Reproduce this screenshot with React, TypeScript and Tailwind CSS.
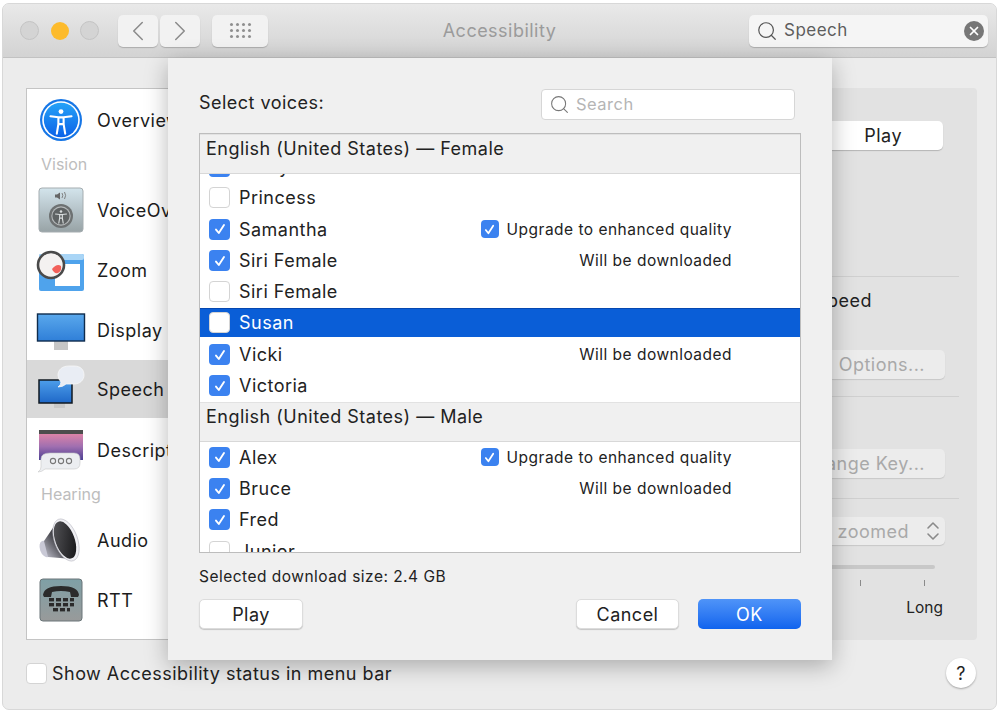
import { Search, X, ChevronLeft, ChevronRight } from 'lucide-react';

function Check({ size = 14 }: { size?: number }) {
  return (
    <svg width={size} height={size} viewBox="0 0 14 14" fill="none">
      <path d="M3 7.6 L5.8 11 L11 3" stroke="white" strokeWidth="1.9" strokeLinecap="round" strokeLinejoin="round" />
    </svg>
  );
}

function Box({ on = false }: { on?: boolean }) {
  if (on) {
    return (
      <span className="flex h-[21px] w-[21px] shrink-0 items-center justify-center rounded-[4px] bg-[#3b82f0]">
        <Check />
      </span>
    );
  }
  return <span className="h-[21px] w-[21px] shrink-0 rounded-[4px] border border-[#d4d4d4] bg-white" />;
}

function Figure({ cx, cy, s, color }: { cx: number; cy: number; s: number; color: string }) {
  return (
    <g transform={`translate(${cx} ${cy}) scale(${s})`} stroke={color} fill="none" strokeLinecap="round" strokeLinejoin="round">
      <circle cx="0" cy="-9" r="2.3" fill={color} stroke="none" />
      <path d="M-10 -4.5 L-2.5 -3.5 L-2.5 3 L-4 12 M10 -4.5 L2.5 -3.5 L2.5 3 L4 12 M-2.5 -3.5 L2.5 -3.5 M-2.5 3 L0 3 L2.5 3" strokeWidth="2" />
    </g>
  );
}

function OverviewIcon() {
  return (
    <svg width="50" height="50" viewBox="0 0 50 50">
      <defs>
        <linearGradient id="ov" x1="0" y1="0" x2="0" y2="1">
          <stop offset="0" stopColor="#25a2f7" />
          <stop offset="1" stopColor="#0a62e8" />
        </linearGradient>
      </defs>
      <circle cx="25" cy="25" r="21" fill="#1676e6" />
      <circle cx="25" cy="25" r="18.8" fill="white" />
      <circle cx="25" cy="25" r="17.2" fill="url(#ov)" />
      <Figure cx={25} cy={26} s={1.05} color="white" />
    </svg>
  );
}

function VoiceOverIcon() {
  return (
    <svg width="50" height="50" viewBox="0 0 50 50">
      <defs>
        <linearGradient id="vo" x1="0" y1="0" x2="0" y2="1">
          <stop offset="0" stopColor="#d3e4ec" />
          <stop offset="1" stopColor="#98a3a6" />
        </linearGradient>
      </defs>
      <rect x="3" y="3" width="44" height="44" rx="3" fill="url(#vo)" stroke="#a5adb0" />
      <path d="M19 9.5 h2 l3 -2 v7 l-3 -2 h-2 z" fill="#666" />
      <path d="M26 8 q1.6 2.5 0 5 M28.5 7 q2.2 3.5 0 7" stroke="#777" strokeWidth="0.9" fill="none" />
      <circle cx="25" cy="31" r="12" fill="#6d7172" />
      <circle cx="25" cy="31" r="9.7" fill="#b5b9ba" />
      <circle cx="25" cy="31" r="8.6" fill="#5f6364" />
      <Figure cx={25} cy={31.5} s={0.55} color="#d8dcdd" />
    </svg>
  );
}

function ZoomIcon() {
  return (
    <svg width="50" height="50" viewBox="0 0 50 50">
      <rect x="3" y="9" width="45" height="37" rx="2" fill="#4fa3ec" />
      <rect x="3" y="9" width="45" height="6" rx="2" fill="#a9d5f6" />
      <rect x="19" y="19" width="25" height="22" fill="white" />
      <circle cx="15" cy="20" r="13" fill="#f4f1f0" stroke="#4a4a4a" strokeWidth="2.6" />
      <path d="M16 24 q5 -6 9 -3 q1 5 -3 7 q-4 1 -6 -4 z" fill="#f2605a" />
    </svg>
  );
}

function DisplayIcon() {
  return (
    <svg width="50" height="50" viewBox="0 0 50 50">
      <defs>
        <linearGradient id="dp" x1="0" y1="0" x2="0" y2="1">
          <stop offset="0" stopColor="#5aa8ec" />
          <stop offset="1" stopColor="#2f7fd8" />
        </linearGradient>
      </defs>
      <rect x="18" y="36" width="14" height="9" fill="#c6c6c6" />
      <rect x="1.5" y="9" width="47" height="27" fill="url(#dp)" stroke="#0f2c4d" strokeWidth="1.4" />
    </svg>
  );
}

function SpeechIcon() {
  return (
    <svg width="50" height="50" viewBox="0 0 50 50">
      <defs>
        <linearGradient id="sp" x1="0" y1="0" x2="0" y2="1">
          <stop offset="0" stopColor="#4d9eea" />
          <stop offset="1" stopColor="#1f68c8" />
        </linearGradient>
      </defs>
      <rect x="18" y="39" width="11" height="5" fill="#c9c9c9" />
      <rect x="3" y="16" width="33" height="23" fill="url(#sp)" stroke="#101820" strokeWidth="1.5" />
      <path d="M33 2 h5 c7 0 10 4 10 9 s-4 9 -10 9 h-8 q-3 3 -8 3 q3 -2 3 -5 q-3 -3 -3 -7 c0 -5 4 -9 11 -9 z" fill="#e9edf4" stroke="#f7f7f7" strokeWidth="0.8" />
    </svg>
  );
}

function DescriptionIcon() {
  return (
    <svg width="50" height="50" viewBox="0 0 50 50">
      <defs>
        <linearGradient id="ds" x1="0" y1="0" x2="0" y2="1">
          <stop offset="0" stopColor="#ef8aa6" />
          <stop offset="0.55" stopColor="#a06fb0" />
          <stop offset="1" stopColor="#4c3f92" />
        </linearGradient>
      </defs>
      <rect x="3" y="5" width="44" height="30" fill="url(#ds)" />
      <rect x="3" y="5" width="44" height="4" fill="#4d4d4d" />
      <path d="M14 28 h24 q6 0 6 6 v4 q0 6 -6 6 h-24 q-4 0 -5 0 q-3 3 -7 3 q3 -2 3 -5 v-8 q0 -6 9 -6 z" fill="#eceef1" stroke="#c7c7c7" strokeWidth="0.6" />
      <circle cx="17" cy="36" r="2.6" fill="none" stroke="#777" strokeWidth="1.1" />
      <circle cx="25" cy="36" r="2.6" fill="none" stroke="#777" strokeWidth="1.1" />
      <circle cx="33" cy="36" r="2.6" fill="none" stroke="#777" strokeWidth="1.1" />
    </svg>
  );
}

function AudioIcon() {
  return (
    <svg width="50" height="50" viewBox="0 0 50 50">
      <defs>
        <linearGradient id="au" x1="0" y1="0" x2="1" y2="1">
          <stop offset="0" stopColor="#5a5a5e" />
          <stop offset="1" stopColor="#101012" />
        </linearGradient>
        <linearGradient id="cone" x1="0" y1="1" x2="1" y2="0">
          <stop offset="0" stopColor="#c9c9d6" />
          <stop offset="0.45" stopColor="#4a4a50" />
          <stop offset="1" stopColor="#1c1c1e" />
        </linearGradient>
      </defs>
      <ellipse cx="9" cy="34" rx="5" ry="8.5" transform="rotate(-20 9 34)" fill="#c9c9d6" />
      <path d="M21 7 L8 26 L12 42 L36 44 z" fill="url(#cone)" />
      <ellipse cx="30" cy="25" rx="11.5" ry="22" transform="rotate(-20 30 25)" fill="#f0f0f4" stroke="#b9b9c2" strokeWidth="0.6" />
      <ellipse cx="29" cy="25" rx="9.6" ry="19.5" transform="rotate(-20 29 25)" fill="url(#au)" />
    </svg>
  );
}

function RttIcon() {
  return (
    <svg width="50" height="50" viewBox="0 0 50 50">
      <defs>
        <linearGradient id="rt" x1="0" y1="0" x2="0" y2="1">
          <stop offset="0" stopColor="#7fa0a6" />
          <stop offset="1" stopColor="#989a9a" />
        </linearGradient>
      </defs>
      <rect x="4" y="4" width="42" height="42" rx="3" fill="url(#rt)" stroke="#6a7578" />
      <path d="M7 20 q1 -9 18 -9 t18 9 l-1 2 h-7 l-1 -5 q-9 -2 -18 0 l-1 5 h-7 z" fill="#2b2b2b" />
      <g fill="#2b2b2b">
        <rect x="13" y="23" width="5" height="3.4" />
        <rect x="20" y="23" width="5" height="3.4" />
        <rect x="27" y="23" width="5" height="3.4" />
        <rect x="34" y="23" width="4" height="3.4" />
        <rect x="13" y="28" width="5" height="3.4" />
        <rect x="20" y="28" width="5" height="3.4" />
        <rect x="27" y="28" width="5" height="3.4" />
        <rect x="34" y="28" width="4" height="3.4" />
        <rect x="17" y="33" width="5" height="3.4" />
        <rect x="24" y="33" width="5" height="3.4" />
        <rect x="31" y="33" width="3" height="3.4" />
      </g>
    </svg>
  );
}

function PaneRow({ icon, label, active }: { icon: React.ReactNode; label: string; active?: boolean }) {
  return (
    <div className={`flex items-center gap-[11px] pl-[9px] whitespace-nowrap text-[18px] text-[#1c1c1c] ${active ? 'mb-[2px] h-[58px] bg-[#d9d9d9]' : 'h-[60px]'}`}>
      {icon}
      {label}
    </div>
  );
}

function PaneLabel({ children }: { children: string }) {
  return <div className="flex h-[30px] items-center pb-[2px] pl-[14px] text-[16px] tracking-normal text-[#bdbdbd]">{children}</div>;
}

function VoiceRow({ name, on, extra, upgrade, selected }: { name: string; on?: boolean; extra?: string; upgrade?: boolean; selected?: boolean }) {
  return (
    <div className={`flex shrink-0 items-center gap-[9px] pl-[9px] text-[18px] ${selected ? 'mb-[2.33px] h-[29px] border-t border-[#0647b0] bg-[#0a5ed7] text-white' : 'h-[31.33px] text-[#222]'}`}>
      <Box on={on} />
      {name}
      {upgrade && (
        <span className="mr-[68px] ml-auto flex items-center gap-[8px] text-[15.5px]">
          <span className="flex h-[18px] w-[18px] items-center justify-center rounded-[4px] bg-[#3b82f0]">
            <Check size={13} />
          </span>
          Upgrade to enhanced quality
        </span>
      )}
      {extra && <span className="mr-[68px] ml-auto text-[15.5px]">{extra}</span>}
    </div>
  );
}

function GroupHeader({ children }: { children: string }) {
  return (
    <div className="relative z-10 h-[40px] shrink-0 border-t border-b border-t-[#e2e2e2] border-b-[#d8d8d8] bg-[#f0f0f0] pt-[1px] pl-[6px] text-[18px] leading-[26px] text-[#222]">
      {children}
    </div>
  );
}

function DlgButton({ children, width, primary }: { children: string; width: string; primary?: boolean }) {
  const tone = primary
    ? 'bg-gradient-to-b from-[#4f94f8] to-[#0f63ee] text-white'
    : 'bg-white text-[#222] border border-[#dcdcdc] shadow-[0_1px_1px_rgba(0,0,0,0.18)]';
  return <div className={`flex h-[30px] items-center justify-center rounded-[5px] text-[18px] ${width} ${tone}`}>{children}</div>;
}

function FaintButton({ children }: { children: string }) {
  return (
    <div className="mr-[32px] flex h-[29px] w-[180px] items-center justify-end rounded-[5px] bg-[#ececec] pr-[20px] text-[18px] text-[#a9a9a9] shadow-[0_1px_1px_rgba(0,0,0,0.12)]">
      {children}
    </div>
  );
}

export default function App() {
  return (
    <div className="relative h-[712px] w-[1000px] overflow-hidden bg-white pt-[3px] pr-[3px] pb-[2px] pl-[2px] font-['Inter',sans-serif] tracking-[0.48px]">
      <div className="flex h-full flex-col overflow-hidden rounded-[7px] border border-[#d8d8d8] bg-[#ececec]">
        <header className="relative flex h-[54px] shrink-0 items-center border-b border-[#c2c2c2] bg-gradient-to-b from-[#e9e9e9] to-[#d3d3d3] pl-[17px]">
          <span className="h-[19px] w-[19px] rounded-full border border-[#c4c4c4] bg-[#d4d4d4]" />
          <span className="ml-[12px] h-[18px] w-[18px] rounded-full bg-[#fdbb2c]" />
          <span className="ml-[11px] h-[19px] w-[19px] rounded-full border border-[#c4c4c4] bg-[#d4d4d4]" />
          <div className="ml-[19px] flex h-[32px] w-[40px] items-center justify-center rounded-[5px] bg-[#f2f2f2] shadow-[0_1px_1px_rgba(0,0,0,0.2)]">
            <ChevronLeft size={34} strokeWidth={1.1} className="text-[#8c8c8c]" />
          </div>
          <div className="ml-[2px] flex h-[32px] w-[40px] items-center justify-center rounded-[5px] bg-[#f2f2f2] shadow-[0_1px_1px_rgba(0,0,0,0.2)]">
            <ChevronRight size={34} strokeWidth={1.1} className="text-[#8c8c8c]" />
          </div>
          <div className="ml-[12px] flex h-[32px] w-[56px] items-center justify-center rounded-[5px] bg-[#f2f2f2] shadow-[0_1px_1px_rgba(0,0,0,0.2)]">
            <div className="grid grid-cols-4 gap-x-[3px] gap-y-[3px]">
              {Array.from({ length: 12 }).map((_, i) => (
                <span key={i} className="h-[3px] w-[3px] rounded-full bg-[#8f8f8f]" />
              ))}
            </div>
          </div>
          <div className="absolute left-0 w-full text-center text-[18px] text-[#9b9b9b]">Accessibility</div>
          <div className="relative mr-[8px] ml-auto flex h-[32px] w-[239px] items-center gap-[6px] rounded-[5px] bg-[#f5f5f5] pr-[4px] pl-[7px] text-[17px] text-[#5d5d5d] shadow-[0_1px_1px_rgba(0,0,0,0.2)]">
            <Search size={22} strokeWidth={1.3} className="text-[#555]" />
            Speech
            <span className="ml-auto flex h-[20px] w-[20px] items-center justify-center rounded-full bg-[#777]">
              <X size={14} strokeWidth={3} className="text-white" />
            </span>
          </div>
        </header>

        <div className="mt-[30px] flex h-[552px] shrink-0 pr-[19px] pl-[23px]">
          <nav className="h-[552px] w-[210px] shrink-0 border border-[#c4c4c4] bg-white pt-[1px]">
            <PaneRow icon={<OverviewIcon />} label="Overview" />
            <PaneLabel>Vision</PaneLabel>
            <PaneRow icon={<VoiceOverIcon />} label="VoiceOver" />
            <PaneRow icon={<ZoomIcon />} label="Zoom" />
            <PaneRow icon={<DisplayIcon />} label="Display" />
            <PaneRow icon={<SpeechIcon />} label="Speech" active />
            <PaneRow icon={<DescriptionIcon />} label="Descriptions" />
            <PaneLabel>Hearing</PaneLabel>
            <PaneRow icon={<AudioIcon />} label="Audio" />
            <PaneRow icon={<RttIcon />} label="RTT" />
          </nav>
          <section className="flex flex-1 flex-col items-end rounded-r-[4px] bg-[#e2e2e2] text-[18px] text-[#222]">
            <div className="mt-[33px] mr-[34px] flex h-[29px] w-[180px] items-center justify-end rounded-[5px] bg-white pr-[41px] shadow-[0_1px_1px_rgba(0,0,0,0.2)]">
              Play
            </div>
            <div className="mt-[126px] mr-[18px] h-px w-[200px] bg-[#d0d0d0]" />
            <div className="mt-[12px] mr-[105px] leading-[24px]">Speed</div>
            <div className="mt-[37px]"><FaintButton>Options...</FaintButton></div>
            <div className="mt-[17px] mr-[18px] h-px w-[200px] bg-[#d0d0d0]" />
            <div className="mt-[52px]"><FaintButton>Change Key...</FaintButton></div>
            <div className="mt-[20px] mr-[18px] h-px w-[200px] bg-[#d0d0d0]" />
            <div className="mt-[18px] mr-[32px] flex h-[28px] w-[180px] items-center justify-end gap-[16px] rounded-[5px] bg-[#ececec] pr-[4px] text-[#a9a9a9] shadow-[0_1px_1px_rgba(0,0,0,0.12)]">
              zoomed
              <svg width="16" height="24" viewBox="0 0 16 24" fill="none" stroke="#8a8a8a" strokeWidth="1.6" strokeLinecap="round" strokeLinejoin="round">
                <path d="M3 9 L8 4 L13 9 M3 15 L8 20 L13 15" />
              </svg>
            </div>
            <div className="mt-[20px] mr-[42px] h-[4px] w-[180px] rounded-full bg-[#c8c8c8]" />
            <div className="mt-[11px] mr-[52px] flex w-[65px] justify-between">
              <span className="h-[6px] w-px bg-[#8a8a8a]" />
              <span className="h-[6px] w-px bg-[#8a8a8a]" />
            </div>
            <div className="mt-[10px] mr-[34px] text-[15.5px] leading-[24px] tracking-normal">Long</div>
          </section>
        </div>

        <footer className="flex flex-1 items-start pt-[18px] pr-[20px] pl-[23px] text-[18px] text-[#222]">
          <span className="mt-[5px] h-[21px] w-[21px] rounded-[4px] border border-[#d4d4d4] bg-white" />
          <span className="mt-[3px] ml-[5px] leading-[26px]">Show Accessibility status in menu bar</span>
          <span className="ml-auto flex h-[30px] w-[30px] items-center justify-center rounded-full bg-white text-[18px] shadow-[0_1px_2px_rgba(0,0,0,0.3)]">?</span>
        </footer>
      </div>

      <div className="absolute top-[58px] left-[168px] flex h-[602px] w-[664px] flex-col bg-[#f0f0f0] px-[31px] text-[#222] shadow-[0_6px_22px_rgba(0,0,0,0.28)]">
        <div className="flex h-[75px] shrink-0 items-start justify-between pr-[6px]">
          <div className="mt-[32px] text-[18px] leading-[26px]">Select voices:</div>
          <div className="mt-[31px] flex h-[31px] w-[254px] items-center gap-[6px] rounded-[4px] border border-[#d6d6d6] bg-white pl-[7px] text-[16.5px] text-[#b5b5b5]">
            <Search size={21} strokeWidth={1.2} className="text-[#777]" />
            Search
          </div>
        </div>

        <div className="flex h-[420px] shrink-0 flex-col overflow-hidden border border-[#bdbdbd] bg-white">
          <GroupHeader>English (United States) — Female</GroupHeader>
          <div className="mt-[-23px] shrink-0">
            <VoiceRow name="Nicky" on />
          </div>
          <VoiceRow name="Princess" />
          <VoiceRow name="Samantha" on upgrade />
          <VoiceRow name="Siri Female" on extra="Will be downloaded" />
          <VoiceRow name="Siri Female" />
          <VoiceRow name="Susan" selected />
          <VoiceRow name="Vicki" on extra="Will be downloaded" />
          <VoiceRow name="Victoria" on />
          <GroupHeader>English (United States) — Male</GroupHeader>
          <VoiceRow name="Alex" on upgrade />
          <VoiceRow name="Bruce" on extra="Will be downloaded" />
          <VoiceRow name="Fred" on />
          <VoiceRow name="Junior" />
        </div>

        <div className="mt-[12px] text-[15.5px] leading-[24px]">Selected download size: 2.4 GB</div>
        <div className="mt-[10px] flex items-center">
          <DlgButton width="w-[104px]">Play</DlgButton>
          <div className="ml-auto flex gap-[19px]">
            <DlgButton width="w-[103px]">Cancel</DlgButton>
            <DlgButton width="w-[103px]" primary>OK</DlgButton>
          </div>
        </div>
      </div>
    </div>
  );
}
